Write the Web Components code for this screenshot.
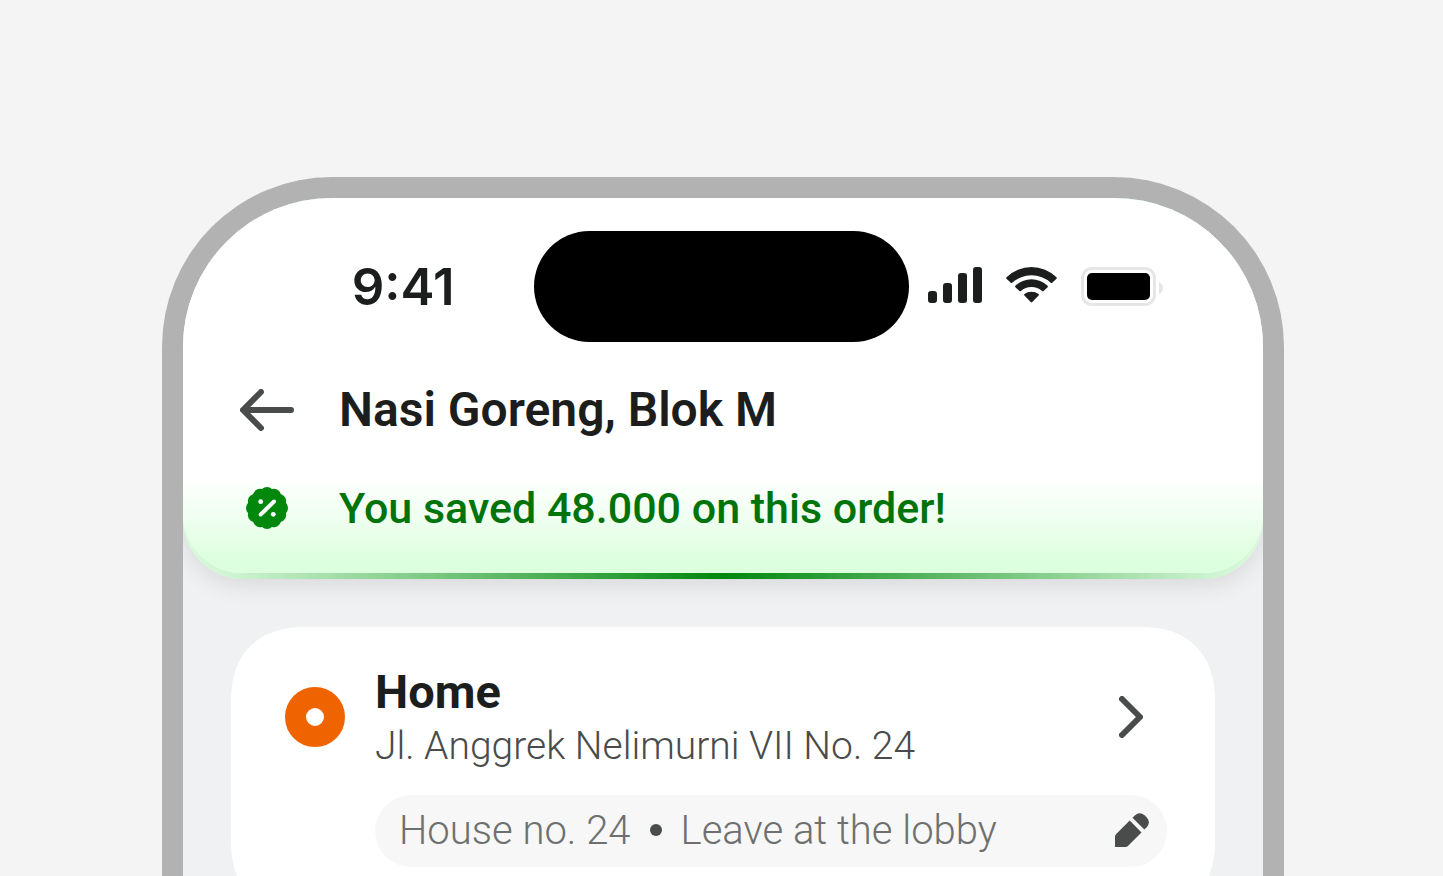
<!DOCTYPE html>
<html lang="en">
<head>
<meta charset="utf-8">
<meta name="viewport" content="width=device-width, initial-scale=1">
<title>Order summary</title>
<style>
  body {
    margin: 0;
    height: 100vh;
    overflow: hidden;
    background: #f4f4f4;
    font-family: Roboto, sans-serif;
    color: #1c1e1d;
    --text-strong: #1c1e1d;
    --text-default: #4a4c4b;
    --text-muted: #6e706f;
    --green: #00880d;
    --green-dark: #00730b;
    --orange: #f06400;
  }
</style>
</head>
<body>
<phone-frame>
  <order-header slot="header">
    <status-bar slot="status" time="9:41"></status-bar>
    <span slot="title">Nasi Goreng, Blok M</span>
    <span slot="savings">You saved 48.000 on this order!</span>
  </order-header>
  <address-card>
    <span slot="name">Home</span>
    <span slot="address">Jl. Anggrek Nelimurni VII No. 24</span>
    <address-note slot="note">
      <span slot="detail">House no. 24</span>
      <span slot="instruction">Leave at the lobby</span>
    </address-note>
  </address-card>
</phone-frame>

<script>
/**
 * Device bezel with the screen inside it
 */
class PhoneFrame extends HTMLElement {
  constructor() {
    super();
    this.attachShadow({ mode: 'open' });
  }

  connectedCallback() {
    this.shadowRoot.innerHTML = `
      <style>
        :host {
          display: flex;
          box-sizing: border-box;
          height: 100%;
          padding: 177px 159px 0 162px;
        }

        .screen {
          flex: 1;
          border: 21px solid #b2b2b2;
          border-bottom: 0;
          border-radius: 170px 170px 0 0;
          background: #f0f1f3;
          overflow: hidden;
        }

        main {
          padding: 48px;
        }
      </style>

      <div class="screen">
        <slot name="header"></slot>
        <main><slot></slot></main>
      </div>
    `;
  }
}

/**
 * Clock, camera cutout and the system icons
 */
class StatusBar extends HTMLElement {
  constructor() {
    super();
    this.attachShadow({ mode: 'open' });
  }

  connectedCallback() {
    this.shadowRoot.innerHTML = `
      <style>
        :host {
          display: grid;
          grid-template-columns: 1fr 375px 1fr;
          align-items: center;
          padding: 33px 4px 0 0;
        }

        .time {
          justify-self: end;
          margin-right: 79px;
          font: 600 51px/60px Inter, sans-serif;
          color: var(--text-strong);
        }

        .island {
          height: 111px;
          border-radius: 56px;
          background: #000;
        }

        .icons {
          display: flex;
          align-items: center;
          gap: 24px;
          padding-left: 19px;
          color: var(--text-strong);
        }

        svg {
          display: block;
          flex: none;
        }
      </style>

      <time class="time">${this.getAttribute('time')}</time>
      <div class="island"></div>
      <div class="icons">
        <svg width="54" height="39" viewBox="0 0 54 39" fill="currentColor" aria-hidden="true">
          <rect x="0" y="24" width="9" height="12" rx="3"/>
          <rect x="15" y="16" width="9" height="20" rx="3"/>
          <rect x="30" y="6" width="9" height="30" rx="3"/>
          <rect x="45" y="0" width="9" height="36" rx="3"/>
        </svg>
        <svg width="51" height="39" viewBox="0 0 51 39" fill="currentColor" aria-hidden="true">
          <path d="M.5 10.2A36 36 0 0 1 50.5 10.2Q51.2 11 50.5 11.7L46.2 15.8Q45.5 16.3 44.8 15.7A29 29 0 0 0 6.2 15.7Q5.5 16.3 4.8 15.8L.5 11.7Q-.2 11 .5 10.2Z"/>
          <path d="M9.4 18.7A23.5 23.5 0 0 1 41.6 18.7Q42.3 19.5 41.6 20.2L37.6 24Q36.9 24.6 36.2 24A16.5 16.5 0 0 0 14.8 24Q14.1 24.6 13.4 24L9.4 20.2Q8.7 19.5 9.4 18.7Z"/>
          <path d="M18.4 27.1A11.5 11.5 0 0 1 32.6 27.1Q33.3 27.8 32.6 28.5L26.3 35Q25.5 35.9 24.7 35L18.4 28.5Q17.7 27.8 18.4 27.1Z"/>
        </svg>
        <svg width="82" height="39" viewBox="0 0 82 39" aria-hidden="true">
          <rect x="1.5" y="1.5" width="72" height="36" rx="9.5" fill="none" stroke="#e6e6e6" stroke-width="3"/>
          <rect x="6" y="6" width="63" height="27" rx="5" fill="#000"/>
          <path d="M78 15Q82 17 82 21T78 27Z" fill="#e6e6e6"/>
        </svg>
      </div>
    `;
  }
}

/**
 * Top sheet: status bar, restaurant name and the savings strip
 */
class OrderHeader extends HTMLElement {
  constructor() {
    super();
    this.attachShadow({ mode: 'open' });
  }

  // scalloped edge of the discount badge
  scallops() {
    let out = '';
    for (let i = 0; i < 12; i++) {
      out += `<circle cx="21" cy="7" r="7" transform="rotate(${i * 30} 21 21)"/>`;
    }
    return out;
  }

  connectedCallback() {
    this.shadowRoot.innerHTML = `
      <style>
        :host {
          display: block;
          position: relative;
          padding-bottom: 6px;
          border-radius: 0 0 60px 60px;
          background: linear-gradient(90deg, #d9fbdb, #d0f5d3 4%, var(--green) 50%, #d0f5d3 96%, #d9fbdb);
          box-shadow: 0 6px 24px rgba(0, 0, 0, 0.1);
        }

        .sheet {
          border-radius: 0 0 60px 60px;
          background: #fff;
          overflow: hidden;
        }

        .nav,
        .savings {
          display: grid;
          grid-template-columns: 60px 1fr;
          column-gap: 42px;
          align-items: center;
          padding: 0 54px;
        }

        .nav {
          height: 136px;
        }

        .savings {
          padding-bottom: 35px;
          background: linear-gradient(#fff, #dcffde 90%);
        }

        h1 {
          margin: 0;
          font-size: 48px;
          line-height: 60px;
          font-weight: 600;
          color: var(--text-strong);
        }

        p {
          margin: 0;
          font-size: 43px;
          line-height: 60px;
          font-weight: 500;
          color: var(--green-dark);
        }

        button {
          display: grid;
          place-items: center;
          height: 60px;
          padding: 0;
          border: 0;
          background: none;
          color: var(--text-default);
          cursor: pointer;
        }

        svg {
          display: block;
        }

        .savings svg {
          justify-self: center;
        }
      </style>

      <div class="sheet">
        <slot name="status"></slot>
        <div class="nav">
          <button aria-label="Back">
            <svg width="54" height="42" viewBox="0 0 54 42" fill="none" stroke="currentColor" stroke-width="6" stroke-linecap="round" stroke-linejoin="round">
              <path d="M21 3L3 21L21 39M4 21H51"/>
            </svg>
          </button>
          <h1><slot name="title"></slot></h1>
        </div>
        <div class="savings">
          <svg width="42" height="42" viewBox="0 0 42 42" fill="#00880d" aria-hidden="true">
            <circle cx="21" cy="21" r="19.6"/>
            ${this.scallops()}
            <path d="M14.7 27.5L28 14.5" stroke="#fff" stroke-width="4" stroke-linecap="round"/>
            <circle cx="14.7" cy="14.7" r="2.4" fill="#fff"/>
            <circle cx="27.3" cy="27.3" r="2.4" fill="#fff"/>
          </svg>
          <p><slot name="savings"></slot></p>
        </div>
      </div>
    `;
  }
}

/**
 * Delivery address card
 */
class AddressCard extends HTMLElement {
  constructor() {
    super();
    this.attachShadow({ mode: 'open' });
  }

  connectedCallback() {
    this.shadowRoot.innerHTML = `
      <style>
        :host {
          display: block;
          padding: 36px 48px 48px 54px;
          border-radius: 76px;
          corner-shape: superellipse(1.25);
          background: #fff;
        }

        .place {
          display: grid;
          grid-template-columns: 60px 1fr 72px;
          align-items: center;
          column-gap: 30px;
          margin-bottom: 24px;
        }

        .pin {
          box-sizing: border-box;
          height: 60px;
          border: 21px solid var(--orange);
          border-radius: 50%;
        }

        h2 {
          margin: 0;
          font-size: 47px;
          line-height: 58px;
          font-weight: 700;
          color: var(--text-strong);
        }

        p {
          margin: 0;
          font-size: 39px;
          line-height: 50px;
          font-weight: 300;
          color: var(--text-default);
        }

        button {
          display: grid;
          place-items: center;
          height: 72px;
          padding: 0;
          border: 0;
          background: none;
          color: var(--text-default);
          cursor: pointer;
        }

        svg {
          display: block;
        }

        .note {
          margin-left: 90px;
        }
      </style>

      <div class="place">
        <div class="pin"></div>
        <div>
          <h2><slot name="name"></slot></h2>
          <p><slot name="address"></slot></p>
        </div>
        <button aria-label="Change address">
          <svg width="24" height="42" viewBox="0 0 24 42" fill="none" stroke="currentColor" stroke-width="6" stroke-linecap="round" stroke-linejoin="round">
            <path d="M3 3L21 21L3 39"/>
          </svg>
        </button>
      </div>
      <div class="note"><slot name="note"></slot></div>
    `;
  }
}

/**
 * Editable note for the driver
 */
class AddressNote extends HTMLElement {
  constructor() {
    super();
    this.attachShadow({ mode: 'open' });
  }

  connectedCallback() {
    this.shadowRoot.innerHTML = `
      <style>
        :host {
          display: block;
        }

        button {
          display: flex;
          align-items: center;
          gap: 19px;
          width: 100%;
          height: 72px;
          padding: 0 18px 2px 24px;
          border: 0;
          border-radius: 36px;
          background: #f7f7f7;
          font: inherit;
          font-size: 40px;
          font-weight: 300;
          color: var(--text-muted);
          cursor: pointer;
        }

        .dot {
          width: 12px;
          height: 12px;
          border-radius: 50%;
          background: var(--text-default);
        }

        svg {
          margin-left: auto;
          color: var(--text-default);
        }
      </style>

      <button>
        <slot name="detail"></slot>
        <span class="dot"></span>
        <slot name="instruction"></slot>
        <svg width="34" height="34" viewBox="0 0 34 34" fill="currentColor" aria-hidden="true">
          <path d="M14.7 7.6L26.5 19.4L13.2 32.8Q12 34 10.5 34H0V23.5Q0 22 1.2 20.9Z"/>
          <path d="M17.5 4.7L19.8 2.4Q24.5 -2 29.5 2.2L31.8 4.5Q36 9.5 31.7 14.2L29.3 16.5Z"/>
        </svg>
      </button>
    `;
  }
}

customElements.define('phone-frame', PhoneFrame);
customElements.define('status-bar', StatusBar);
customElements.define('order-header', OrderHeader);
customElements.define('address-card', AddressCard);
customElements.define('address-note', AddressNote);
</script>
</body>
</html>
